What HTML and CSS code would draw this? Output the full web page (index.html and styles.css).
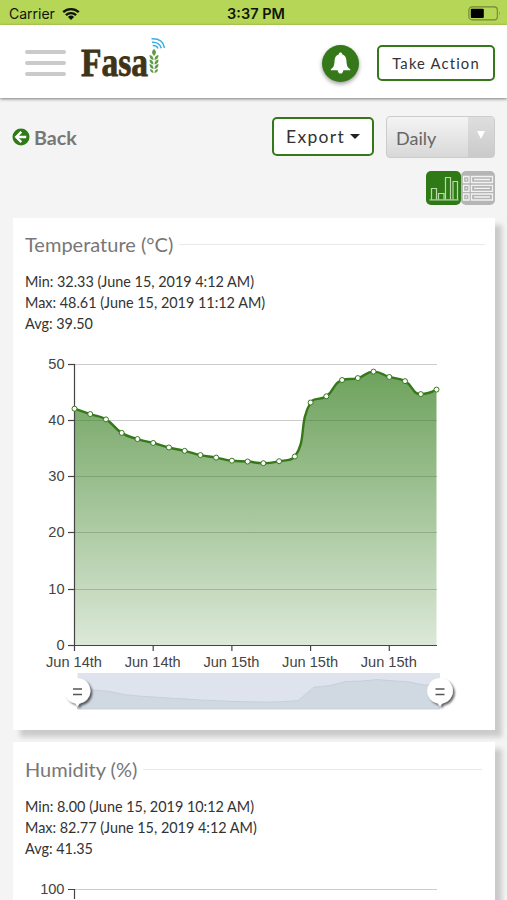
FILE: index.html
```html
<!DOCTYPE html>
<html lang="en">
<head>
    <meta charset="UTF-8">
    <title>Fasal</title>
    <meta name="viewport" content="width=device-width, initial-scale=1">
    <link rel="stylesheet" href="styles.css">
</head>
<body>
<!-- status bar -->
<div class="status">
    <div class="carrier">
        <span>Carrier</span>
        <svg width="18" height="14" viewBox="0 0 18 14">
            <path d="M1.2 5.2a11.2 11.2 0 0 1 15.6 0M3.9 8.1a7.4 7.4 0 0 1 10.2 0" fill="none" stroke="#10140a" stroke-width="2.3"/>
            <path d="M9 13L5.9 9.9a4.5 4.5 0 0 1 6.2 0z" fill="#10140a"/>
        </svg>
    </div>
    <div class="clock">3:37 PM</div>
    <svg class="battery" width="33" height="15" viewBox="0 0 33 15">
        <rect x=".9" y=".9" width="28.4" height="13" rx="3.2" fill="none" stroke="#718633" stroke-width="1.1"/>
        <rect x="2.8" y="2.8" width="13" height="9.2" rx="1" fill="#000"/>
        <path d="M31 5.3q1.6 2 0 4.2z" fill="#718633"/>
    </svg>
</div>

<header class="header">
    <div class="menu"><i></i><i></i><i></i></div>
    <svg class="logo" width="90" height="54" viewBox="0 0 90 54">
        <text class="logo-text" x="3" y="40" textLength="67" lengthAdjust="spacingAndGlyphs">Fasa</text>
        <g fill="#5f9c43">
            <path d="M76 13q4 3 0 7q-4-4 0-7z"/>
            <path d="M75.500 24q-4-.5-4-5q4 .5 4 5zM76.500 24q4-.5 4-5q-4 .5-4 5z"/>
            <path d="M75.500 28.500q-4-.5-4-5q4 .5 4 5zM76.500 28.500q4-.5 4-5q-4 .5-4 5z"/>
            <path d="M75.500 33q-4-.5-4-5q4 .5 4 5zM76.500 33q4-.5 4-5q-4 .5-4 5z"/>
            <path d="M75.500 37q-3.500-.5-3.500-4q3.500 .5 3.500 4zM76.500 37q3.500-.5 3.500-4q-3.500 .5-3.500 4z"/>
        </g>
        <g fill="none" stroke="#38aee6" stroke-width="1.5">
            <path d="M73.500 2.800q11.500-.5 13 9"/>
            <path d="M74 6.300q7.500-.3 9.300 6"/>
            <path d="M74.700 9.500q4.300-.2 5.300 3"/>
        </g>
    </svg>
    <div class="bell">
        <svg width="21" height="23" viewBox="0 0 22 24">
            <path d="M11 .5c1 0 1.700.7 1.700 1.700c3 .8 4.300 3.400 4.500 6.600c.3 5 .8 7.100 4 9.300v1H.8v-1c3.200-2.200 3.700-4.300 4-9.300c.2-3.200 1.500-5.800 4.500-6.600C9.300 1.200 10 .5 11 .5zM8 19h6q-.6 3.500-3 3.500T8 19z" fill="#fff"/>
        </svg>
    </div>
    <button class="btn take-action">Take Action</button>
</header>

<div class="toolbar">
    <a class="back">
        <svg width="18" height="18" viewBox="0 0 18 18">
            <circle cx="9" cy="9" r="8.500" fill="#2f7a17"/>
            <path d="M9.300 3.900L4.200 9l5.100 5.100M4.800 9h9.400" fill="none" stroke="#fff" stroke-width="2.300"/>
        </svg>
        <span>Back</span>
    </a>
    <button class="btn export">Export<i class="caret"></i></button>
    <div class="select">
        <span>Daily</span>
        <div class="select-arrow"><i></i></div>
    </div>
</div>

<div class="views">
    <div class="view active">
        <svg width="30" height="26" viewBox="0 0 30 26" fill="none" stroke="#b8dba9" stroke-width="1.200">
            <path d="M.5 24.900h29"/>
            <path d="M2.500 24.500v-11h5v11M9.500 24.500v-6h5.500v6M16.500 24.500V2.500h5v22M24 24.500v-18h4.500v18"/>
        </svg>
    </div>
    <div class="view">
        <svg width="32" height="27" viewBox="0 0 32 27" fill="none" stroke="#f2f2f2" stroke-width="1.300">
            <path d="M1.500 1.500h5.500v6H1.500zM1.500 10.300h5.500v6H1.500zM1.500 19h5.500v6H1.500z"/>
            <path d="M9.500 1.500h21v6h-21zM9.500 10.300h21v6h-21zM9.500 19h21v6h-21z"/>
            <path d="M3.600 4.500h1.400M3.600 13.300h1.400M3.600 22h1.400M12 4.500h16M12 13.300h16M12 22h16"/>
        </svg>
    </div>
</div>

<section class="card">
    <h2>Temperature (°C)</h2>
    <div class="stats">
        <p>Min: 32.33 (June 15, 2019 4:12 AM)</p>
        <p>Max: 48.61 (June 15, 2019 11:12 AM)</p>
        <p>Avg: 39.50</p>
    </div>
    <svg class="chart" width="481" height="376">
        <defs>
            <linearGradient id="fade" x1="0" y1="27" x2="0" y2="301" gradientUnits="userSpaceOnUse">
                <stop offset="0" stop-color="#2f7a17" stop-opacity=".7"/>
                <stop offset="1" stop-color="#2f7a17" stop-opacity=".17"/>
            </linearGradient>
            <filter id="drop" x="-50%" y="-50%" width="200%" height="200%">
                <feDropShadow dx="2" dy="2" stdDeviation="1.200" flood-color="#000" flood-opacity=".6"/>
            </filter>
        </defs>
        <g id="grid"></g>
        <path id="area" fill="url(#fade)"/>
        <path class="axis" d="M61.500 20v281.500M61 301.500h363"/>
        <g id="ticks"></g>
        <path id="line"/>
        <g id="dots"></g>
        <!-- zoom slider -->
        <rect x="64.500" y="329" width="362.500" height="36" fill="#dfe3ed"/>
        <path id="preview" fill="#d0d9e2" stroke="#c2ccd6" stroke-width=".8"/>
        <g class="handle" transform="translate(64.500 347.500)">
            <path d="M-2 12L0 15l2-3A12.800 12.800 0 1 0-2 12z"/>
            <path class="grip" d="M-4.500-2.500h9M-4.500 3h9"/>
        </g>
        <g class="handle" transform="translate(427 347.500)">
            <path d="M-2 12L0 15l2-3A12.800 12.800 0 1 0-2 12z"/>
            <path class="grip" d="M-4.500-2.500h9M-4.500 3h9"/>
        </g>
    </svg>
</section>

<section class="card humidity">
    <h2>Humidity (%)</h2>
    <div class="stats">
        <p>Min: 8.00 (June 15, 2019 10:12 AM)</p>
        <p>Max: 82.77 (June 15, 2019 4:12 AM)</p>
        <p>Avg: 41.35</p>
    </div>
    <svg class="chart" width="481" height="30">
        <path class="gridline" d="M62 20.500h362"/>
        <path class="axis" d="M55 20.500h6.500V30"/>
        <text class="label" x="51.500" y="25" text-anchor="end">100</text>
    </svg>
</section>

<script>
    let temps = [42.1, 41.15, 40.2, 37.8, 36.7, 36, 35.2, 34.6, 33.85, 33.4, 32.85, 32.7,
                 32.4, 32.75, 33.6, 43.2, 44.3, 47.2, 47.55, 48.7, 47.75, 47, 44.7, 45.5];
    let days = ["Jun 14th", "Jun 14th", "Jun 15th", "Jun 15th", "Jun 15th"];
    let step = 362 / 23;
    let points = temps.map((t, i) => [61.5 + i * step, 301.3 - t * 5.62]);

    // bezier control points, kept inside the box of the neighbouring points
    function clamp(v, a, b) {
        return Math.min(Math.max(v, Math.min(a, b)), Math.max(a, b));
    }

    function controls(i) {
        let p = points[i], a = points[i - 1], b = points[i + 1];
        if (!a || !b) return [p, p];
        let da = Math.hypot(p[0] - a[0], p[1] - a[1]);
        let db = Math.hypot(p[0] - b[0], p[1] - b[1]);
        let ratio = db / (da + db);
        let after = [0, 1].map(k => clamp(p[k] + (b[k] - a[k]) * 0.5 * ratio, p[k], b[k]));
        let before = [0, 1].map(k => clamp(p[k] - (after[k] - p[k]) * da / db, a[k], p[k]));
        after = [0, 1].map(k => clamp(p[k] + (p[k] - before[k]) * db / da, p[k], b[k]));
        return [before, after];
    }

    let d = "M" + points[0];
    for (let i = 1; i < points.length; i++) {
        d += "C" + controls(i - 1)[1] + " " + controls(i)[0] + " " + points[i];
    }
    document.getElementById("line").setAttribute("d", d);
    document.getElementById("area").setAttribute("d", d + "V301.3H61.5Z");
    document.getElementById("dots").innerHTML = points.map(p => `<circle cx="${p[0]}" cy="${p[1]}" r="2.5"/>`).join("");

    let small = temps.map((t, i) => [64.5 + i * 362.5 / 23, 335.5 + (48.7 - t) * 1.39]);
    document.getElementById("preview").setAttribute("d", "M" + small.join("L") + "V365H64.5Z");

    let grid = "", ticks = "";
    for (let v = 0; v <= 50; v += 10) {
        let y = Math.floor(301.3 - v * 5.62) + 0.5;
        if (v) grid += `<path class="gridline" d="M62 ${y}h362"/>`;
        ticks += `<path class="axis" d="M55 ${y}h7"/><text class="label" x="51.5" y="${y + 4.5}" text-anchor="end">${v}</text>`;
    }
    days.forEach(function(day, i) {
        let x = 61.5 + i * step * 5;
        ticks += `<path class="axis" d="M${x} 301v6"/><text class="label" x="${x - 0.5}" y="323" text-anchor="middle">${day}</text>`;
    });
    document.getElementById("grid").innerHTML = grid;
    document.getElementById("ticks").innerHTML = ticks;
</script>
</body>
</html>
```
FILE: styles.css
```css
* {
    box-sizing: border-box;
}
body {
    margin: 0;
    height: 900px;
    overflow: hidden;
    background: #f4f4f4;
    font-family: Lato, "Liberation Sans", sans-serif;
    color: #333;
}
.status {
    display: grid;
    grid-template-columns: 1fr auto 1fr;
    align-items: center;
    height: 25px;
    padding: 2px 6px 0 9px;
    background: #b5d657;
    font-family: Inter, "Liberation Sans", sans-serif;
    font-size: 14px;
    color: #10140a;
}
.carrier {
    display: flex;
    align-items: center;
    gap: 7px;
}
.clock {
    font-weight: 600;
    font-size: 14.5px;
    padding-left: 2px;
}
.battery {
    justify-self: end;
}
.header {
    display: flex;
    align-items: center;
    height: 73px;
    padding: 3px 12px 0 25px;
    background: #fff;
    box-shadow: 0 1px 3px rgba(0, 0, 0, .5);
}
.menu {
    display: flex;
    flex-direction: column;
    gap: 7px;
    width: 41px;
}
.menu i {
    height: 4px;
    border-radius: 2px;
    background: #cacaca;
}
.logo {
    margin: -1px 0 0 12px;
}
.logo-text {
    font-family: "Liberation Serif", serif;
    font-weight: bold;
    font-size: 39px;
    fill: #3f3415;
    stroke: #3f3415;
    stroke-width: .8px;
}
.bell {
    display: flex;
    align-items: center;
    justify-content: center;
    width: 37px;
    height: 37px;
    margin-left: auto;
    border-radius: 50%;
    background: #35781a;
    box-shadow: 0 2px 4px rgba(0, 0, 0, .4);
}
.btn {
    padding: 0;
    border: 2px solid #35781a;
    border-radius: 5px;
    background: #fff;
    font-family: inherit;
    color: #333;
}
.take-action {
    width: 118px;
    height: 36px;
    margin-left: 18px;
    font-size: 14.8px;
    letter-spacing: 1.15px;
}
.toolbar {
    display: flex;
    align-items: center;
    height: 42px;
    margin: 18px 12px 0;
}
.back {
    display: flex;
    align-items: center;
    gap: 4px;
    margin-right: auto;
    font-size: 19.7px;
    font-weight: bold;
    color: #777;
}
.export {
    display: flex;
    align-items: center;
    justify-content: center;
    gap: 5px;
    width: 102px;
    height: 39px;
    margin-bottom: 1px;
    font-size: 17.5px;
    letter-spacing: 1.3px;
}
.caret {
    border: 5px solid transparent;
    border-top-color: #222;
    border-bottom: 0;
}
.select {
    display: flex;
    justify-content: space-between;
    width: 109px;
    height: 42px;
    margin-left: 12px;
    padding-left: 9px;
    border: 1px solid #ccc;
    border-radius: 4px;
    background: linear-gradient(#f4f4f4, #d8d8d8);
    font-size: 18px;
    line-height: 42px;
    color: #666;
}
.select-arrow {
    display: flex;
    justify-content: center;
    width: 26px;
    padding-top: 14px;
    background: linear-gradient(#dedede, #cacaca);
}
.select-arrow i {
    height: 8px;
    border: 4.5px solid transparent;
    border-top: 8px solid #fff;
    border-bottom: 0;
}
.views {
    display: flex;
    justify-content: flex-end;
    height: 34px;
    margin: 13px 12px 13px;
}
.view {
    display: flex;
    align-items: center;
    justify-content: center;
    width: 34px;
    border-radius: 5px;
    background: #b5b5b5;
}
.view.active {
    width: 35px;
    background: #2f7a17;
}
.card {
    height: 512px;
    margin: 0 12px 12px 13px;
    padding-top: 14px;
    background: #fff;
    box-shadow: 7px 7px 5px rgba(0, 0, 0, .17);
}
.card h2 {
    display: flex;
    align-items: center;
    gap: 6px;
    margin: 0 10px 0 12px;
    font-size: 20px;
    font-weight: normal;
    line-height: 24px;
    color: #777;
}
.card h2::after {
    content: "";
    flex: 1;
    height: 1px;
    background: #e9e9e9;
}
.stats {
    margin: 15px 12px 10px;
    font-size: 14.4px;
    line-height: 21px;
}
.stats p {
    margin: 0;
}
.humidity {
    height: 158px;
    margin-bottom: 0;
    padding-top: 15px;
}
.humidity h2 {
    margin-right: 13px;
}
.chart {
    display: block;
}
.gridline {
    stroke: #ccc;
}
.axis {
    fill: none;
    stroke: #444;
    stroke-width: 1.2px;
}
.label {
    font-family: "Liberation Sans", sans-serif;
    font-size: 14.6px;
    fill: #444;
}
#line {
    fill: none;
    stroke: #35781a;
    stroke-width: 2.4px;
}
#dots circle {
    fill: #fff;
    stroke: #35781a;
}
.handle {
    fill: #fff;
    filter: url(#drop);
}
.grip {
    stroke: #555;
    stroke-width: 1.4px;
}
```
